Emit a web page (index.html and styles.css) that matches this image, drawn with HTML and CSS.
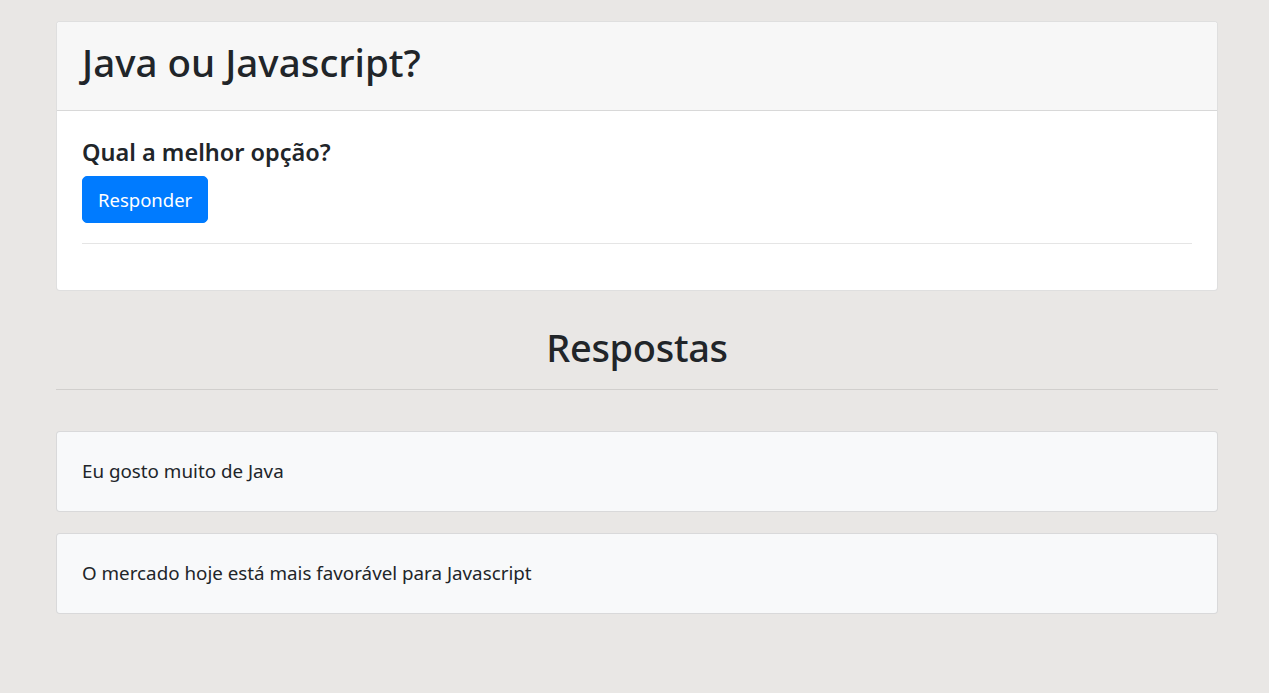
FILE: index.html
```html
<!DOCTYPE html>
<html lang="pt-BR">
<head>
<meta charset="utf-8">
<title>Java ou Javascript?</title>
<link rel="stylesheet" href="styles.css">
</head>
<body>
<main class="page">
  <section class="card">
    <header class="card-header">
      <h1 class="title">Java ou Javascript?</h1>
    </header>
    <div class="card-body">
      <h4 class="question">Qual a melhor opção?</h4>
      <button class="btn-primary" type="button">Responder</button>
      <hr class="divider">
    </div>
  </section>

  <h1 class="answers-title">Respostas</h1>
  <hr class="answers-rule">

  <div class="answer">Eu gosto muito de Java</div>
  <div class="answer">O mercado hoje está mais favorável para Javascript</div>
</main>
</body>
</html>
```

FILE: styles.css
```css
* { box-sizing: border-box; }

html, body {
  margin: 0;
  padding: 0;
}

body {
  background: #e9e7e5;
  color: #212529;
  font-family: "Noto Sans", "Open Sans", sans-serif;
}

.page {
  width: 1162px;
  margin-left: 56px;
  padding-top: 21px;
}

.card {
  background: #fff;
  border: 1px solid rgba(0, 0, 0, 0.125);
  border-radius: 4px;
  overflow: hidden;
}

.card-header {
  background: #f7f7f7;
  border-bottom: 1px solid rgba(0, 0, 0, 0.125);
  padding: 16px 25px 24px;
}

.title {
  margin: 0;
  font-size: 38.5px;
  font-weight: 500;
  line-height: 48px;
}

.card-body {
  padding: 26px 25px 46px;
}

.question {
  margin: 0 0 9px;
  font-size: 23.5px;
  font-weight: 600;
  line-height: 30px;
}

.btn-primary {
  display: block;
  background: #007bff;
  color: #fff;
  border: 1px solid #007bff;
  border-radius: 5px;
  font-family: inherit;
  font-size: 18.5px;
  line-height: 29px;
  padding: 8px 15px;
  height: 47px;
}

.divider {
  margin: 20px 0 0;
  border: 0;
  border-top: 1px solid rgba(0, 0, 0, 0.1);
}

.answers-title {
  margin: 32px 0 0;
  text-align: center;
  font-size: 38px;
  font-weight: 500;
  line-height: 48px;
  letter-spacing: -0.3px;
}

.answers-rule {
  margin: 18px 0 41px;
  border: 0;
  border-top: 1px solid rgba(0, 0, 0, 0.1);
}

.answer {
  background: #f8f9fa;
  border: 1px solid rgba(0, 0, 0, 0.125);
  border-radius: 4px;
  padding: 26px 25px;
  font-size: 18.8px;
  line-height: 27px;
  margin-bottom: 21px;
}
```
